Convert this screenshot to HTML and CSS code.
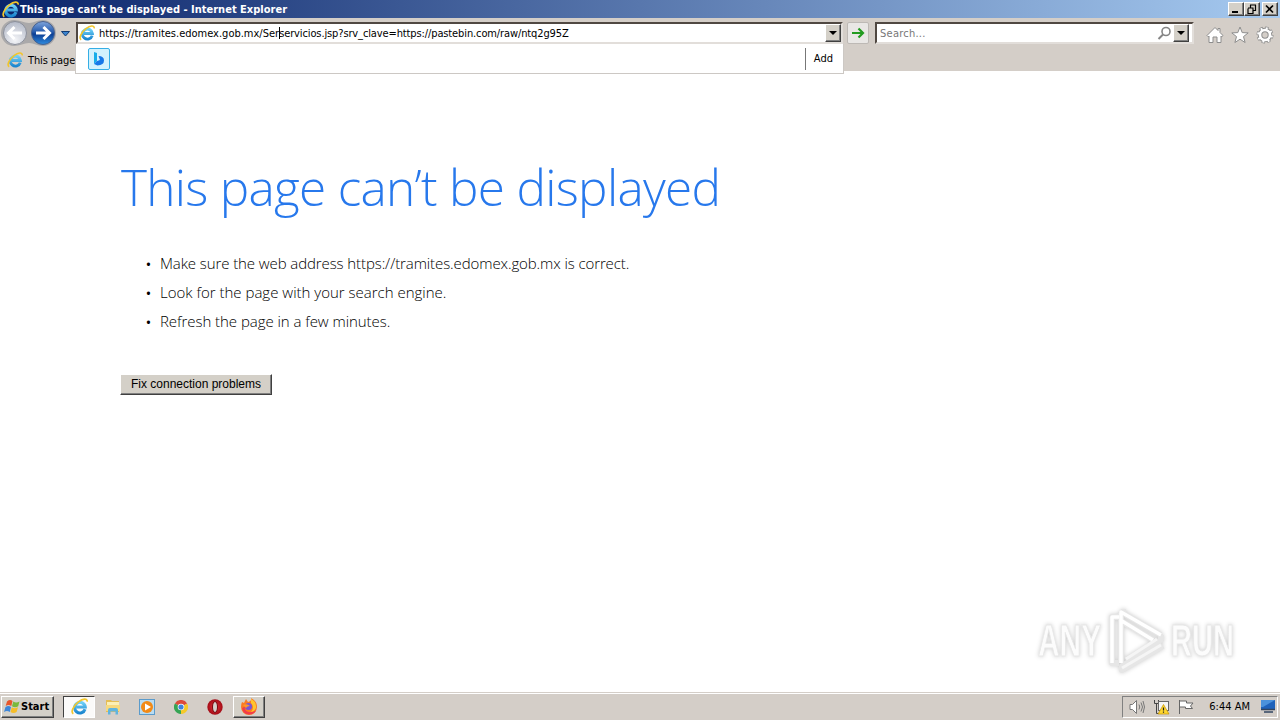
FILE: index.html
```html
<!DOCTYPE html>
<html>
<head>
<title>This page can’t be displayed</title>
<meta http-equiv="content-type" content="text/html; charset=utf-8">
<link rel="stylesheet" href="styles.css">
</head>

<body>
<svg class="defs" width="0" height="0">
    <defs>
        <linearGradient id="ie-blue" x1="0" y1="0" x2="0" y2="1">
            <stop offset="0" stop-color="#6fd0f7"/>
            <stop offset="1" stop-color="#1b86cf"/>
        </linearGradient>
        <radialGradient id="back-fill" cx=".5" cy=".8" r=".8">
            <stop offset="0" stop-color="#f4f5f8"/>
            <stop offset="1" stop-color="#b4bac8"/>
        </radialGradient>
        <linearGradient id="fwd-fill" x1="0" y1="0" x2="0" y2="1">
            <stop offset="0" stop-color="#7fa5dc"/>
            <stop offset=".45" stop-color="#265bad"/>
            <stop offset=".55" stop-color="#0d3f94"/>
            <stop offset="1" stop-color="#2f8ce0"/>
        </linearGradient>
        <radialGradient id="opera-red">
            <stop offset="0" stop-color="#e8313a"/>
            <stop offset="1" stop-color="#a30c16"/>
        </radialGradient>
    </defs>
    <symbol id="ie" viewBox="0 0 16 16">
        <path d="M13.2 10.6A5 5 0 1 1 13.4 8.500H5" fill="none" stroke="url(#ie-blue)" stroke-width="2.900"/>
        <path d="M2.200 14.800C-.6 13.200 2.400 7 7 3.600 11 .6 15.400-.2 15.200 3.400" fill="none" stroke="#f2c52b" stroke-width="1.600"/>
    </symbol>
</svg>

<div class="titlebar">
    <svg width="17" height="17"><use href="#ie"/></svg>
    <span class="title-text">This page can’t be displayed - Internet Explorer</span>
    <div class="window-buttons">
        <div class="winbtn"><svg width="13" height="10"><path d="M3 8h6" stroke="#000" stroke-width="2"/></svg></div>
        <div class="winbtn"><svg width="13" height="10"><path d="M5 1h6M5.500 1v3M10.500 1v5.500H8M3 4h5.500M3 4.500v5h5v-5" fill="none" stroke="#000" stroke-width="1.200"/></svg></div>
        <div class="winbtn close"><svg width="13" height="10"><path d="M3 1.500l7 7M10 1.500l-7 7" stroke="#000" stroke-width="1.700"/></svg></div>
    </div>
</div>

<div class="navbar">
    <svg width="76" height="28" viewBox="0 0 76 28">
        <path d="M14 2C20 2 24 5 29 5S37 2 43 2A13 13 0 0 1 43 28C37 28 34 25 29 25S20 28 14 28A13 13 0 0 1 14 2Z" fill="#aaa9aa"/>
        <circle cx="15" cy="15" r="11.500" fill="url(#back-fill)" stroke="#8c909b"/>
        <circle cx="43" cy="15" r="11.500" fill="url(#fwd-fill)" stroke="#49628f"/>
        <path d="M22 15H9M14.500 9L8.500 15l6 6" fill="none" stroke="#fff" stroke-width="3"/>
        <path d="M36 15h13M43.500 9l6 6-6 6" fill="none" stroke="#fff" stroke-width="3"/>
        <path d="M61.500 13.500h8l-4 4.500z" fill="#3b84cf" stroke="#123b73"/>
    </svg>
    <div class="address">
        <svg width="16" height="16"><use href="#ie"/></svg>
        <span class="url">https://tramites.edomex.gob.mx/Ser<i class="caret"></i><span class="url-rest">servicios.jsp?srv_clave=https://pastebin.com/raw/ntq2g95Z</span></span>
        <div class="dropbtn"></div>
        <div class="suggest">
            <svg width="22" height="22" viewBox="0 0 22 22">
                <rect x=".5" y=".5" width="21" height="21" rx="1.500" fill="#d2f2fd" stroke="#35aee5"/>
                <path d="M6 4l3 1v8l-3 3z" fill="#16aee9"/>
                <path d="M6 16l3-3 3-1-1.500-4q5.500 0 5.500 4.500T9.500 17.500z" fill="#1678e8"/>
            </svg>
            <span class="add">Add</span>
        </div>
    </div>
    <div class="go"><svg width="14" height="14"><path d="M1 7h11M7.500 2.500L12 7l-4.500 4.500" fill="none" stroke="#239b20" stroke-width="2.200"/></svg></div>
    <div class="search">
        <span class="placeholder">Search...</span>
        <svg width="15" height="15"><circle cx="9" cy="5.500" r="4" fill="none" stroke="#858585" stroke-width="1.600"/><path d="M6 8.500L1.500 13" stroke="#858585" stroke-width="2"/></svg>
        <div class="dropbtn"></div>
    </div>
    <div class="tools">
        <svg width="18" height="18"><path d="M1 9.500L9 1.500l3 3V2.500h2v4l3 3-1.300 1.300L15 10v6.500h-4V11H7v5.500H3V10l-.7.800z" fill="#fff" stroke="#8d8d8d"/></svg>
        <svg width="18" height="18"><path d="M9 1l2.200 5.600 6 .3-4.700 3.700 1.600 5.900L9 13.200l-5.100 3.300 1.600-5.900L.8 6.900l6-.3z" fill="#fff" stroke="#8d8d8d"/></svg>
        <svg width="18" height="18">
            <circle cx="9" cy="9" r="6.800" fill="none" stroke="#8d8d8d" stroke-width="3.400" stroke-dasharray="3.100 2.240"/>
            <circle cx="9" cy="9" r="5" fill="none" stroke="#8d8d8d" stroke-width="4.600"/>
            <circle cx="9" cy="9" r="6.800" fill="none" stroke="#fff" stroke-width="2.200" stroke-dasharray="1.900 3.440" stroke-dashoffset="-.6"/>
            <circle cx="9" cy="9" r="5" fill="none" stroke="#fff" stroke-width="2.600"/>
        </svg>
    </div>
</div>

<div class="tabrow">
    <svg width="16" height="16"><use href="#ie"/></svg>
    <span class="tab-text">This page</span>
</div>

<div class="page">
    <h1>This page can’t be displayed</h1>
    <ul>
        <li class="address-hint">Make sure the web address https://tramites.edomex.gob.mx is correct.</li>
        <li>Look for the page with your search engine.</li>
        <li class="refresh-hint">Refresh the page in a few minutes.</li>
    </ul>
    <button class="fix">Fix connection problems</button>

    <div class="watermark">
        <span class="mark-any">ANY</span>
        <svg width="60" height="66" viewBox="0 0 60 66" fill="none" stroke-linejoin="round">
            <path d="M12 9H5v46h7M14 5v50M14 4L54 27M14 13L46 32M14 4h5M54 27v5L19 52M54 35L15 58v4L56 38" stroke="#e6e6e6" stroke-width="6"/>
            <path d="M12 9H5v46M14 55V4L54 27M15 13l31 19" stroke="#fff" stroke-width="3.500"/>
            <path d="M50 31L19 51M54 37L15 60" stroke="#f5f5f5" stroke-width="3"/>
        </svg>
        <span class="mark-run">RUN</span>
    </div>
</div>

<div class="taskbar">
    <div class="start">
        <svg width="17" height="16" viewBox="0 0 17 16">
            <path d="M3 2.500Q6-.2 8.500 2L7.300 7Q4.500 5 1.700 7z" fill="#e8562a"/>
            <path d="M9.300 2.500Q12 4.500 15.500 2.500L14.200 7.300Q11 9 8 7.300z" fill="#79b93c"/>
            <path d="M1.500 8Q4.500 6 7 8L5.800 13Q3 11 0 13z" fill="#3e86d8"/>
            <path d="M7.800 8.200Q11 10 14 8.300L12.600 13Q9.500 15 6.500 13z" fill="#f6bd28"/>
        </svg>
        <span>Start</span>
    </div>
    <div class="task pressed"><svg width="17" height="17"><use href="#ie"/></svg></div>
    <div class="task">
        <svg width="16" height="16" viewBox="0 0 16 16">
            <path d="M1 1h5l1 1h7v11H1z" fill="#e5bd55"/><path d="M2 3h12v4H2z" fill="#fbefb6"/>
            <path d="M1 6h14v6H1z" fill="#f6d97f"/>
            <path d="M3 15.500V11q0-2 2-2h6q2 0 2 2v4.500h-2.500v-3h-5v3z" fill="#5fb4df"/>
        </svg>
    </div>
    <div class="task">
        <svg width="16" height="16">
            <rect x=".5" y=".5" width="15" height="15" fill="#b9dcf2" stroke="#5b9bcb"/>
            <circle cx="8" cy="8" r="6" fill="#f28a17"/><path d="M6 4.500v7L12 8z" fill="#fff"/>
        </svg>
    </div>
    <div class="task">
        <svg width="14" height="14" viewBox="0 0 14 14">
            <path d="M7 7L.9 3.500A7 7 0 0 1 13.100 3.500z" fill="#dd4a3b"/>
            <path d="M7 7L13.100 3.500A7 7 0 0 1 7 14z" fill="#f5c929"/>
            <path d="M7 7v7A7 7 0 0 1 .9 3.500z" fill="#36a454"/>
            <circle cx="7" cy="7" r="3.300" fill="#fff"/><circle cx="7" cy="7" r="2.600" fill="#3f83dd"/>
        </svg>
    </div>
    <div class="task">
        <svg width="16" height="16"><circle cx="8" cy="8" r="7.700" fill="url(#opera-red)"/><ellipse cx="8" cy="8" rx="2.500" ry="5.500" fill="#d5cfca" stroke="#75060c"/></svg>
    </div>
    <div class="task raised">
        <svg width="18" height="17" viewBox="0 0 18 17">
            <path d="M2 4l2 1 2-4 2 3q4-1 3-4 6 3 6 9a8 8 0 0 1-16 0Q1 6 2 4z" fill="#fb7a23"/>
            <path d="M11 1q6 3 5 9-2 4-5 4 4-5 0-9z" fill="#ffc52d"/>
            <path d="M2 10q1 6 7 6.500 5 0 7-4-5 3-9 1-3-2-2-5z" fill="#f23b4c"/>
            <circle cx="8.500" cy="8.500" r="3.500" fill="#7655d6"/>
            <path d="M3 7q4-2 7 1-3 0-4 2z" fill="#ff9726"/>
        </svg>
    </div>
    <div class="tray">
        <svg width="16" height="16" fill="none" stroke="#777"><path d="M1 5.500h2.500L7.500 1.500v13L3.500 10.500H1z" fill="#fff"/><path d="M10 5.500q1.500 2.500 0 5M12 3.500q3 4.500 0 9M14 2q3 6 0 12"/></svg>
        <svg width="17" height="16">
            <path d="M1.500 1v3.500h4V1M3.500 4.500V14.500h5" fill="none" stroke="#444"/>
            <rect x="5.500" y="2.500" width="10" height="9" fill="#f5f5f5" stroke="#666"/>
            <path d="M10.500 5.500L16 15H5z" fill="#ffd72e" stroke="#c59300" stroke-width=".7"/><path d="M10.500 8.500v3M10.500 12.500v1.300" stroke="#222" stroke-width="1.200"/>
        </svg>
        <svg width="18" height="16"><path d="M1.500 1v14M1.500 2h7v2h6.500l-2.500 3 2 2.500H7.500V8h-6" fill="#fff" stroke="#666"/></svg>
        <span class="clock">6:44 AM</span>
        <svg width="16" height="15"><path d="M1 1h14v9H1z" fill="#1e62bb"/><path d="M1 1h14L3 8H1z" fill="#4b92dc"/><path d="M1 10.500h14M4 13h9" stroke="#304561" stroke-width="1.500"/></svg>
    </div>
</div>
</body>
</html>
```
FILE: styles.css
```css
body {
    margin: 0;
    width: 1280px;
    height: 720px;
    overflow: hidden;
    display: flex;
    flex-direction: column;
    background: #fff;
    color: #000;
    font: 11px/14px "DejaVu Sans Condensed", "DejaVu Sans", sans-serif;
    font-stretch: condensed;
    white-space: nowrap;
}
svg {
    display: block;
    flex: none;
}
.defs {
    position: absolute;
}

/* title bar */
.titlebar {
    flex: none;
    height: 18px;
    display: flex;
    align-items: center;
    padding: 0 2px;
    box-sizing: border-box;
    background: linear-gradient(90deg, #0a246a, #a6caf0);
}
.title-text {
    margin-left: 1px;
    padding-top: 1px;
    color: #fff;
    font-weight: bold;
    letter-spacing: .01px;
}
.window-buttons {
    margin-left: auto;
    display: flex;
}
.winbtn, .dropbtn, .start, .fix, .raised {
    background: #d4d0c8;
    border: 1px solid;
    border-color: #fff #404040 #404040 #fff;
    box-shadow: inset -1px -1px #808080;
    box-sizing: border-box;
}
.winbtn {
    width: 16px;
    height: 14px;
    padding: 1px 0 0 0;
}
.close {
    margin-left: 2px;
}

/* navigation */
.navbar {
    flex: none;
    height: 28px;
    display: flex;
    background: #d4cec8;
}
.address, .search {
    box-sizing: border-box;
    height: 22px;
    margin-top: 4px;
    display: flex;
    align-items: center;
    background: #fff;
    border: 2px solid;
    border-color: #504842 #e2deda #e2deda #504842;
}
.address {
    position: relative;
    width: 767px;
    padding-left: 1px;
}
.address .url {
    margin-left: 4px;
    padding-top: 2px;
}
.url-rest {
    letter-spacing: -.12px;
}
.caret {
    display: inline-block;
    width: 1px;
    height: 12px;
    margin-right: -1px;
    vertical-align: -2px;
    background: #000;
}
.dropbtn {
    width: 16px;
    height: 18px;
    margin-left: auto;
    display: flex;
    align-items: center;
    justify-content: center;
}
.dropbtn::after {
    content: "";
    border: 4px solid transparent;
    border-top-color: #000;
    border-bottom: 0;
}
.suggest {
    position: absolute;
    left: -3px;
    top: 20px;
    z-index: 2;
    width: 769px;
    height: 30px;
    box-sizing: border-box;
    padding: 0 10px 0 12px;
    display: flex;
    align-items: center;
    justify-content: space-between;
    background: #fff;
    border: 1px solid #ccc8c4;
    border-top: 0;
}
.add {
    padding-left: 8px;
    line-height: 22px;
    border-left: 1px solid #777;
}
.go {
    width: 22px;
    height: 22px;
    box-sizing: border-box;
    margin: 4px 6px 0 4px;
    padding: 3px;
    background: #e9e7e5;
    border: 1px solid #bdb9b5;
    border-radius: 2px;
}
.search {
    width: 319px;
    padding: 0 3px 0 3px;
}
.placeholder {
    padding-top: 2px;
    color: #777;
    letter-spacing: .25px;
}
.search svg {
    margin-left: auto;
}
.search .dropbtn {
    margin-left: 1px;
}
.tools {
    display: flex;
    gap: 7px;
    padding: 8px 0 0 12px;
}

.tabrow {
    flex: none;
    height: 25px;
    box-sizing: border-box;
    display: flex;
    align-items: center;
    gap: 5px;
    padding: 3px 0 0 7px;
    background: #d4cec8;
}
.tab-text {
    padding-top: 1px;
    letter-spacing: -.1px;
}

/* error page */
.page {
    position: relative;
    flex: 1;
    padding-left: 120px;
}
h1 {
    margin: 81px 0 0 1px;
    font: 300 49.5px/70px "Open Sans", sans-serif;
    letter-spacing: -.7px;
    color: #2778ec;
}
ul {
    margin: 27px 0 0 0;
    padding: 0 0 0 40px;
    list-style: none;
    font: 300 15px/29px "Open Sans", sans-serif;
}
li {
    height: 29px;
}
li::before {
    content: "•";
    display: inline-block;
    width: 14px;
    margin-left: -14px;
    font-weight: 600;
    font-size: 13px;
    line-height: 1;
    letter-spacing: 0;
}
.address-hint {
    letter-spacing: -.095px;
}
.refresh-hint {
    letter-spacing: -.05px;
}
.fix {
    display: block;
    width: 152px;
    height: 21px;
    margin-top: 38px;
    padding: 0 0 1px;
    font: 12px "Liberation Sans", sans-serif;
}
.watermark {
    position: absolute;
    left: 1038px;
    bottom: 18px;
    display: flex;
    align-items: center;
    gap: 4px;
    font: bold 44px/66px "Liberation Sans", sans-serif;
    color: #fcfcfc;
    -webkit-text-stroke: 1px #e8e8e8;
    filter: drop-shadow(0 0 2px #ccc);
}
.mark-any, .mark-run {
    width: 65px;
    transform: scaleX(.68);
    transform-origin: 0 50%;
}
.mark-run {
    transform: scaleX(.66);
}

/* taskbar */
.taskbar {
    flex: none;
    height: 28px;
    box-sizing: border-box;
    display: flex;
    align-items: center;
    padding: 2px 2px 2px 1px;
    background: #d4cec8;
    border-top: 1px solid #d4cec8;
    box-shadow: inset 0 1px #fff;
}
.start {
    width: 53px;
    height: 22px;
    margin-right: 9px;
    padding-left: 2px;
    display: flex;
    align-items: center;
    font-weight: bold;
}
.task {
    width: 32px;
    height: 22px;
    margin-right: 2px;
    box-sizing: border-box;
    display: flex;
    align-items: center;
    justify-content: center;
}
.pressed {
    background: #fbfaf9;
    border: 1px solid;
    border-color: #404040 #fff #fff #404040;
}
.tray {
    width: 156px;
    height: 22px;
    margin-left: auto;
    box-sizing: border-box;
    padding: 0 1px 0 6px;
    display: flex;
    align-items: center;
    gap: 8px;
    border: 1px solid;
    border-color: #808080 #fff #fff #808080;
}
.clock {
    margin: 0 2px 0 auto;
}
```
